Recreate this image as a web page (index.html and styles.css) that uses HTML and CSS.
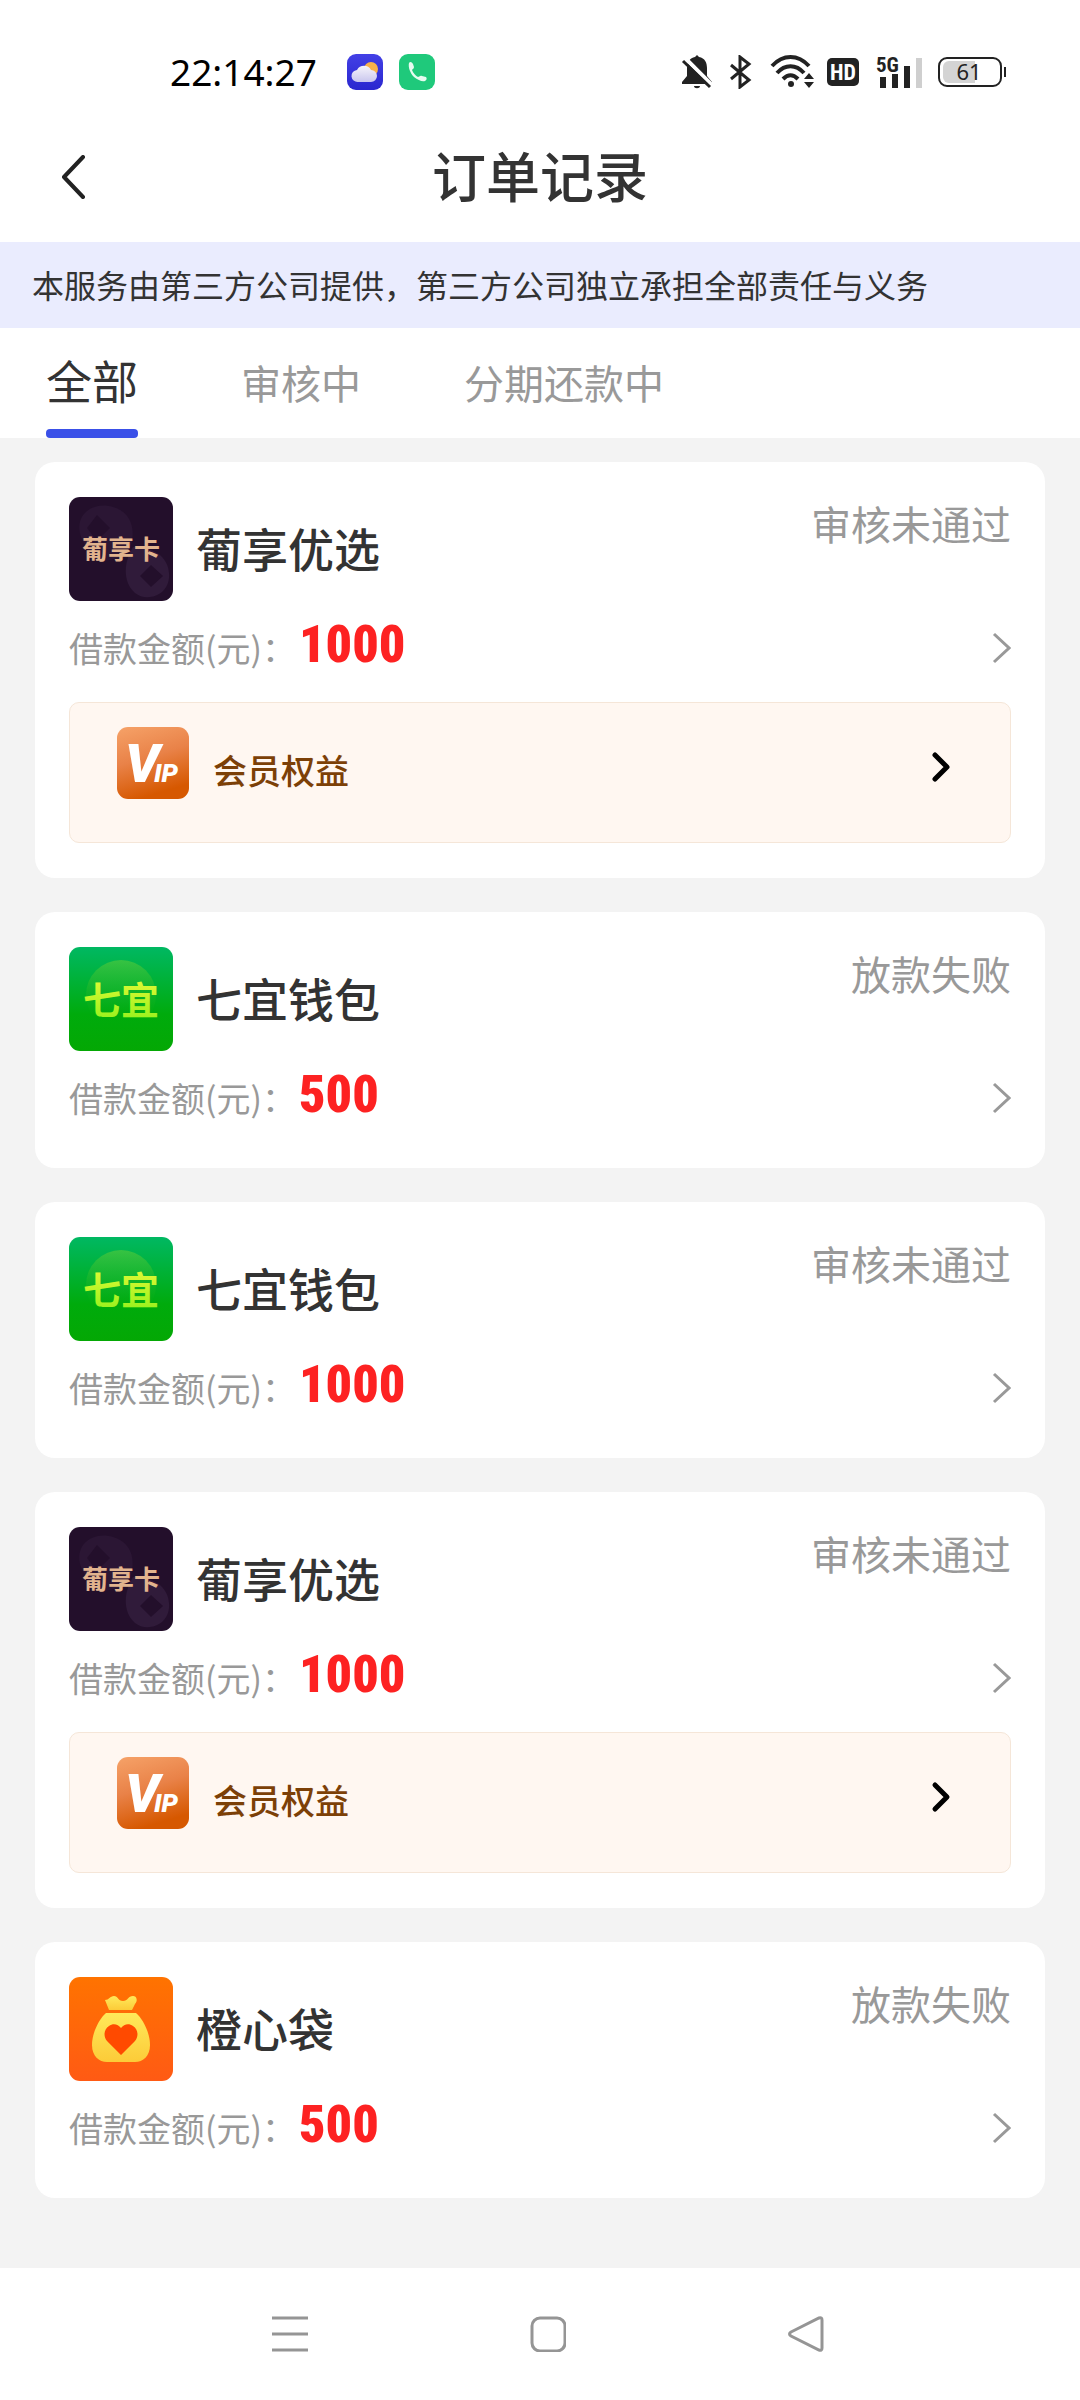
FILE: index.html
```html
<!DOCTYPE html>
<html lang="zh-CN">
<head>
<meta charset="utf-8">
<meta name="viewport" content="width=device-width, initial-scale=1">
<title>订单记录</title>
<link rel="stylesheet" href="styles.css">
</head>
<body>
<svg class="defs" aria-hidden="true">
  <defs>
    <linearGradient id="g-weather" x1="0" y1="0" x2="0" y2="1"><stop offset="0" stop-color="#4340e6"/><stop offset="1" stop-color="#2a27cf"/></linearGradient>
    <linearGradient id="g-cloud" x1="0" y1="0" x2="0" y2="1"><stop offset="0" stop-color="#f6f4fb"/><stop offset="1" stop-color="#c9c6ee"/></linearGradient>
    <linearGradient id="g-green" x1="0" y1="0" x2="0" y2="1"><stop offset="0" stop-color="#00b862"/><stop offset=".65" stop-color="#00ab0c"/><stop offset="1" stop-color="#04a804"/></linearGradient>
    <linearGradient id="g-disc" x1="0" y1="0" x2="0" y2="1"><stop offset="0" stop-color="#4fc83c" stop-opacity=".7"/><stop offset=".8" stop-color="#1fb31a" stop-opacity="0"/></linearGradient>
    <linearGradient id="g-lime" x1="0" y1="0" x2="0" y2="1"><stop offset="0" stop-color="#f2fb3a"/><stop offset="1" stop-color="#8ef01a"/></linearGradient>
    <linearGradient id="g-orange" x1="0" y1="0" x2="0" y2="1"><stop offset="0" stop-color="#ff7300"/><stop offset="1" stop-color="#ff5a14"/></linearGradient>
    <linearGradient id="g-bag" x1="0" y1="0" x2="0" y2="1"><stop offset="0" stop-color="#ffe95a"/><stop offset="1" stop-color="#fccb38"/></linearGradient>
    <linearGradient id="g-vip" x1="0" y1="0" x2=".3" y2="1"><stop offset="0" stop-color="#f6a268"/><stop offset=".5" stop-color="#e98248"/><stop offset="1" stop-color="#d65800"/></linearGradient>
    <symbol id="logo-pu" viewBox="0 0 104 104">
      <rect width="104" height="104" rx="11" fill="#230f2b"/>
      <path d="M12 40C4 16 26 4 44 10c20 6 22 24 18 38s-30 20-40 12z" fill="#2b1634"/>
      <path d="M28 18l13 13-13 13-10-13z" fill="#230f2b"/>
      <path d="M64 50c12 0 34 4 36 26s-22 30-34 20-12-30-2-46z" fill="#301b3a"/>
      <path d="M82 68l12 11-12 11-11-11z" fill="#230f2b"/>
      <text x="13" y="62" class="logo-pu-text">葡享卡</text>
    </symbol>
    <symbol id="logo-qi" viewBox="0 0 104 104">
      <rect width="104" height="104" rx="11" fill="url(#g-green)"/>
      <circle cx="52" cy="48" r="35" fill="url(#g-disc)"/>
      <text x="14" y="67" class="logo-qi-text">七宜</text>
    </symbol>
    <symbol id="logo-bag" viewBox="0 0 104 104">
      <rect width="104" height="104" rx="11" fill="url(#g-orange)"/>
      <path d="M36 23c4 0 5-4 9-4 4 0 4 5 9 5s5-5 10-5c4 0 5 5 2 8l-3 6H40z" fill="url(#g-bag)"/>
      <path d="M37 36h30c7 6 14 20 14 32 0 11-7 17-15 17H38c-8 0-15-6-15-17 0-12 7-26 14-32z" fill="url(#g-bag)"/>
      <path d="M52 78L38 64c-4-5-3-12 2-15 4-3 9-2 12 2 3-4 8-5 12-2 5 3 6 10 2 15z" fill="#ff4a00"/>
    </symbol>
    <symbol id="icon-vip" viewBox="0 0 72 72">
      <rect width="72" height="72" rx="11" fill="url(#g-vip)"/>
      <text x="8" y="55" class="vip-v">V</text>
      <text x="37" y="55" class="vip-ip">IP</text>
    </symbol>
    <symbol id="icon-next" viewBox="0 0 20 32"><path d="M3 2l15 14L3 30" fill="none" stroke="currentColor" stroke-width="3"/></symbol>
    <symbol id="icon-next-bold" viewBox="0 0 20 32"><path d="M4 4l12 12L4 28" fill="none" stroke="currentColor" stroke-width="5" stroke-linecap="round" stroke-linejoin="round"/></symbol>
  </defs>
</svg>

<div class="screen">
  <div class="status-bar">
    <div class="status-left">
      <time class="clock">22:14:27</time>
      <svg class="app-icon" viewBox="0 0 36 36" aria-label="天气">
        <rect width="36" height="36" rx="9" fill="url(#g-weather)"/>
        <circle cx="24" cy="15" r="7" fill="#f9b24a"/>
        <path d="M11 28a6 6 0 0 1-1-12 8 8 0 0 1 14 0 6 6 0 0 1 0 12z" fill="url(#g-cloud)"/>
      </svg>
      <svg class="app-icon" viewBox="0 0 36 36" aria-label="电话">
        <rect width="36" height="36" rx="9" fill="#1fc97b"/>
        <path d="M10 9c1-2 3-1 4 1l1 3c0 2-2 2-2 3 1 3 4 6 6 7 1 0 2-2 4-1l4 1c1 1 1 3-1 4-3 1-7-1-11-4-4-4-6-10-5-14z" fill="#e6fbf0"/>
      </svg>
    </div>
    <div class="status-right">
      <svg class="ic-bell" viewBox="0 0 32 34" aria-label="静音">
        <path d="M16 0l2 2c6 1 8 6 8 11v8l5 6v2H1v-2l5-6v-8C6 7 9 3 14 2zM13 31h6c0 3-6 3-6 0z" fill="#222"/>
        <path d="M3 2l29 29" stroke="#fff" stroke-width="4"/>
        <path d="M2 6l27 26" stroke="#222" stroke-width="3"/>
      </svg>
      <svg class="ic-bt" viewBox="0 0 22 34" aria-label="蓝牙"><path d="M1 10l18 15-9 7V2l9 7L1 24" fill="none" stroke="#222" stroke-width="3"/></svg>
      <svg class="ic-wifi" viewBox="0 0 46 36" aria-label="无线网络">
        <g fill="none" stroke="#222" stroke-width="4"><path d="M2 12c11-12 26-12 37 0"/><path d="M7 19c8-9 19-9 27 0"/><path d="M13 25c5-5 10-5 15 0"/></g>
        <circle cx="21" cy="30" r="3" fill="#222"/>
        <path d="M34 25l5-6 5 6zM34 28h10l-5 6z" fill="#222"/>
      </svg>
      <svg class="ic-hd" viewBox="0 0 32 28" aria-label="HD"><rect width="32" height="28" rx="5" fill="#222"/><text x="16" y="22" class="hd-text">HD</text></svg>
      <svg class="ic-signal" viewBox="0 0 48 38" aria-label="5G">
        <text x="0" y="19" class="net-text">5G</text>
        <path d="M4 24h6v11H4zM16 21h6v14h-6zM28 13h6v22h-6z" fill="#222"/><path d="M40 5h6v30h-6z" fill="#cfcfcf"/>
      </svg>
      <svg class="ic-battery" viewBox="0 0 70 30" aria-label="电量 61">
        <path d="M11 4h26v22H11a6 6 0 0 1-6-6V10a6 6 0 0 1 6-6z" fill="#d4d4d4"/>
        <rect x="1" y="1" width="62" height="28" rx="8" fill="none" stroke="#222" stroke-width="2"/>
        <path d="M66 10h2v10h-2z" fill="#222"/><text x="31" y="23" class="bat-text">61</text>
      </svg>
    </div>
  </div>

  <header class="title-bar">
    <button class="back" type="button" aria-label="返回"><svg class="ic-back" viewBox="0 0 26 44"><path d="M23 2L4 22l19 20" fill="none" stroke="#222" stroke-width="4" stroke-linecap="round" stroke-linejoin="round"/></svg></button>
    <h1 class="title">订单记录</h1>
  </header>

  <p class="notice">本服务由第三方公司提供，第三方公司独立承担全部责任与义务</p>

  <nav class="tabs">
    <a class="tab tab-active" href="#all">全部</a>
    <a class="tab" href="#review">审核中</a>
    <a class="tab" href="#repay">分期还款中</a>
  </nav>

  <main class="orders">
    <article class="card">
      <div class="card-head"><svg class="logo"><use href="#logo-pu"/></svg><h2 class="name">葡享优选</h2><span class="state">审核未通过</span></div>
      <a class="amount-row" href="#order-1"><span class="label">借款金额(元)：</span><strong class="amount">1000</strong><svg class="next"><use href="#icon-next"/></svg></a>
      <a class="vip" href="#vip-1"><svg class="vip-icon"><use href="#icon-vip"/></svg><span class="vip-label">会员权益</span><svg class="next-bold"><use href="#icon-next-bold"/></svg></a>
    </article>
    <article class="card">
      <div class="card-head"><svg class="logo"><use href="#logo-qi"/></svg><h2 class="name">七宜钱包</h2><span class="state">放款失败</span></div>
      <a class="amount-row" href="#order-2"><span class="label">借款金额(元)：</span><strong class="amount">500</strong><svg class="next"><use href="#icon-next"/></svg></a>
    </article>
    <article class="card">
      <div class="card-head"><svg class="logo"><use href="#logo-qi"/></svg><h2 class="name">七宜钱包</h2><span class="state">审核未通过</span></div>
      <a class="amount-row" href="#order-3"><span class="label">借款金额(元)：</span><strong class="amount">1000</strong><svg class="next"><use href="#icon-next"/></svg></a>
    </article>
    <article class="card">
      <div class="card-head"><svg class="logo"><use href="#logo-pu"/></svg><h2 class="name">葡享优选</h2><span class="state">审核未通过</span></div>
      <a class="amount-row" href="#order-4"><span class="label">借款金额(元)：</span><strong class="amount">1000</strong><svg class="next"><use href="#icon-next"/></svg></a>
      <a class="vip" href="#vip-4"><svg class="vip-icon"><use href="#icon-vip"/></svg><span class="vip-label">会员权益</span><svg class="next-bold"><use href="#icon-next-bold"/></svg></a>
    </article>
    <article class="card">
      <div class="card-head"><svg class="logo"><use href="#logo-bag"/></svg><h2 class="name">橙心袋</h2><span class="state">放款失败</span></div>
      <a class="amount-row" href="#order-5"><span class="label">借款金额(元)：</span><strong class="amount">500</strong><svg class="next"><use href="#icon-next"/></svg></a>
    </article>
  </main>

  <div class="system-nav">
    <button class="sys" type="button" aria-label="菜单"><svg class="ic-sys" viewBox="0 0 36 36"><path d="M0 2h36M0 18h36M0 34h36"/></svg></button>
    <button class="sys" type="button" aria-label="主页"><svg class="ic-sys" viewBox="0 0 36 36"><rect x="2" y="2" width="33" height="33" rx="8"/></svg></button>
    <button class="sys" type="button" aria-label="返回上一页"><svg class="ic-sys" viewBox="0 0 36 36"><path d="M3 16L31 2q3-1 3 2v28q0 3-3 2L3 20q-3-2 0-4z"/></svg></button>
  </div>
</div>
</body>
</html>
```

FILE: styles.css
```css
* { box-sizing: border-box; }

body {
  margin: 0;
  background: #fff;
  color: #333;
  font-family: "Noto Sans CJK SC", sans-serif;
}

h1, h2, p { margin: 0; }
a { color: inherit; text-decoration: none; }
button { padding: 0; border: 0; background: none; }
svg { display: block; flex: none; }

.defs { position: absolute; width: 0; height: 0; }

.screen {
  display: flex;
  flex-direction: column;
  min-height: 100vh;
}

/* status bar */
.status-bar {
  display: flex;
  justify-content: space-between;
  align-items: center;
  height: 144px;
  padding: 0 72px 0 170px;
}
.status-left { display: flex; align-items: center; gap: 16px; }
.clock {
  margin-right: 14px;
  color: #000;
  font: 400 37px/48px "Noto Sans", sans-serif;
}
.app-icon { width: 36px; height: 36px; }
.status-right { display: flex; align-items: center; }
.ic-bell { width: 32px; height: 34px; margin-right: 17px; }
.ic-bt { width: 22px; height: 34px; margin-right: 18px; }
.ic-wifi { width: 46px; height: 36px; margin-right: 11px; }
.ic-hd { width: 32px; height: 28px; margin-right: 17px; }
.ic-signal { width: 48px; height: 38px; margin-right: 14px; overflow: visible; }
.ic-battery { width: 70px; height: 30px; }
.hd-text { font: 700 22px "Roboto Condensed", "Roboto", sans-serif; fill: #fff; text-anchor: middle; }
.net-text { font: 700 21px "Roboto Condensed", "Roboto", sans-serif; fill: #222; }
.bat-text { font: 400 22px "Noto Sans", sans-serif; fill: #222; text-anchor: middle; }

/* title bar */
.title-bar {
  display: grid;
  grid-template-columns: 120px 1fr 120px;
  align-items: center;
  height: 98px;
  padding-bottom: 32px;
}
.back { display: flex; padding-left: 60px; }
.ic-back { width: 26px; height: 44px; }
.title {
  padding-bottom: 4px;
  font-size: 54px;
  font-weight: 500;
  line-height: 62px;
  text-align: center;
}

.notice {
  padding: 18px 32px 20px;
  background: #eaecfe;
  font-size: 32px;
  line-height: 48px;
}

/* tabs */
.tabs {
  display: flex;
  gap: 103px;
  height: 110px;
  padding: 0 46px;
  background: #fff;
}
.tab {
  color: #999;
  font-size: 40px;
  line-height: 108px;
}
.tab-active {
  position: relative;
  color: #333;
  font-size: 46px;
  line-height: 102px;
}
.tab-active::after {
  content: "";
  position: absolute;
  right: 0;
  bottom: 0;
  left: 0;
  height: 9px;
  border-radius: 4px;
  background: #3a50e8;
}

/* orders */
.orders {
  display: flex;
  flex: 1;
  flex-direction: column;
  gap: 34px;
  padding: 24px 35px 70px;
  background: #f3f3f3;
}
.card {
  padding: 35px 34px;
  border-radius: 20px;
  background: #fff;
}
.card-head { display: flex; align-items: center; gap: 23px; }
.logo { width: 104px; height: 104px; }
.name {
  flex: 1;
  padding-bottom: 4px;
  font-size: 46px;
  font-weight: 500;
  line-height: 60px;
}
.state {
  align-self: flex-start;
  color: #999;
  font-size: 40px;
  line-height: 52px;
}
.amount-row {
  display: flex;
  align-items: center;
  height: 82px;
  padding-top: 12px;
}
.label { color: #999; font-size: 34px; line-height: 48px; }
.amount {
  flex: 1;
  padding: 0 0 6px 3px;
  color: #fd2222;
  font: 900 52px/60px "Roboto Condensed", "Roboto", sans-serif;
}
.next { width: 20px; height: 32px; color: #999; }

.vip {
  display: flex;
  align-items: center;
  height: 141px;
  margin-top: 19px;
  padding: 0 59px 20px 47px;
  border: 1px solid #f5e6d8;
  border-radius: 10px;
  background: #fff7f1;
}
.vip-icon { width: 72px; height: 72px; margin-right: 24px; }
.vip-label {
  flex: 1;
  padding-top: 14px;
  color: #7c4007;
  font-size: 34px;
  font-weight: 500;
  line-height: 48px;
}
.next-bold { width: 20px; height: 32px; margin-top: 8px; color: #000; }

.logo-pu-text { font: 700 26px "Noto Sans CJK SC", sans-serif; fill: #e2b48e; }
.logo-qi-text { font: 700 38px "Noto Sans CJK SC", sans-serif; fill: url(#g-lime); }
.vip-v { font: italic 900 54px "Roboto", sans-serif; fill: #fff; }
.vip-ip { font: italic 900 26px "Roboto", sans-serif; fill: #fff; }

/* system navigation */
.system-nav {
  display: flex;
  justify-content: center;
  gap: 222px;
  height: 132px;
  padding: 48px 0 0 16px;
  background: #fff;
}
.sys { height: 36px; }
.ic-sys { width: 36px; height: 36px; fill: none; stroke: #959595; stroke-width: 3; }
```
